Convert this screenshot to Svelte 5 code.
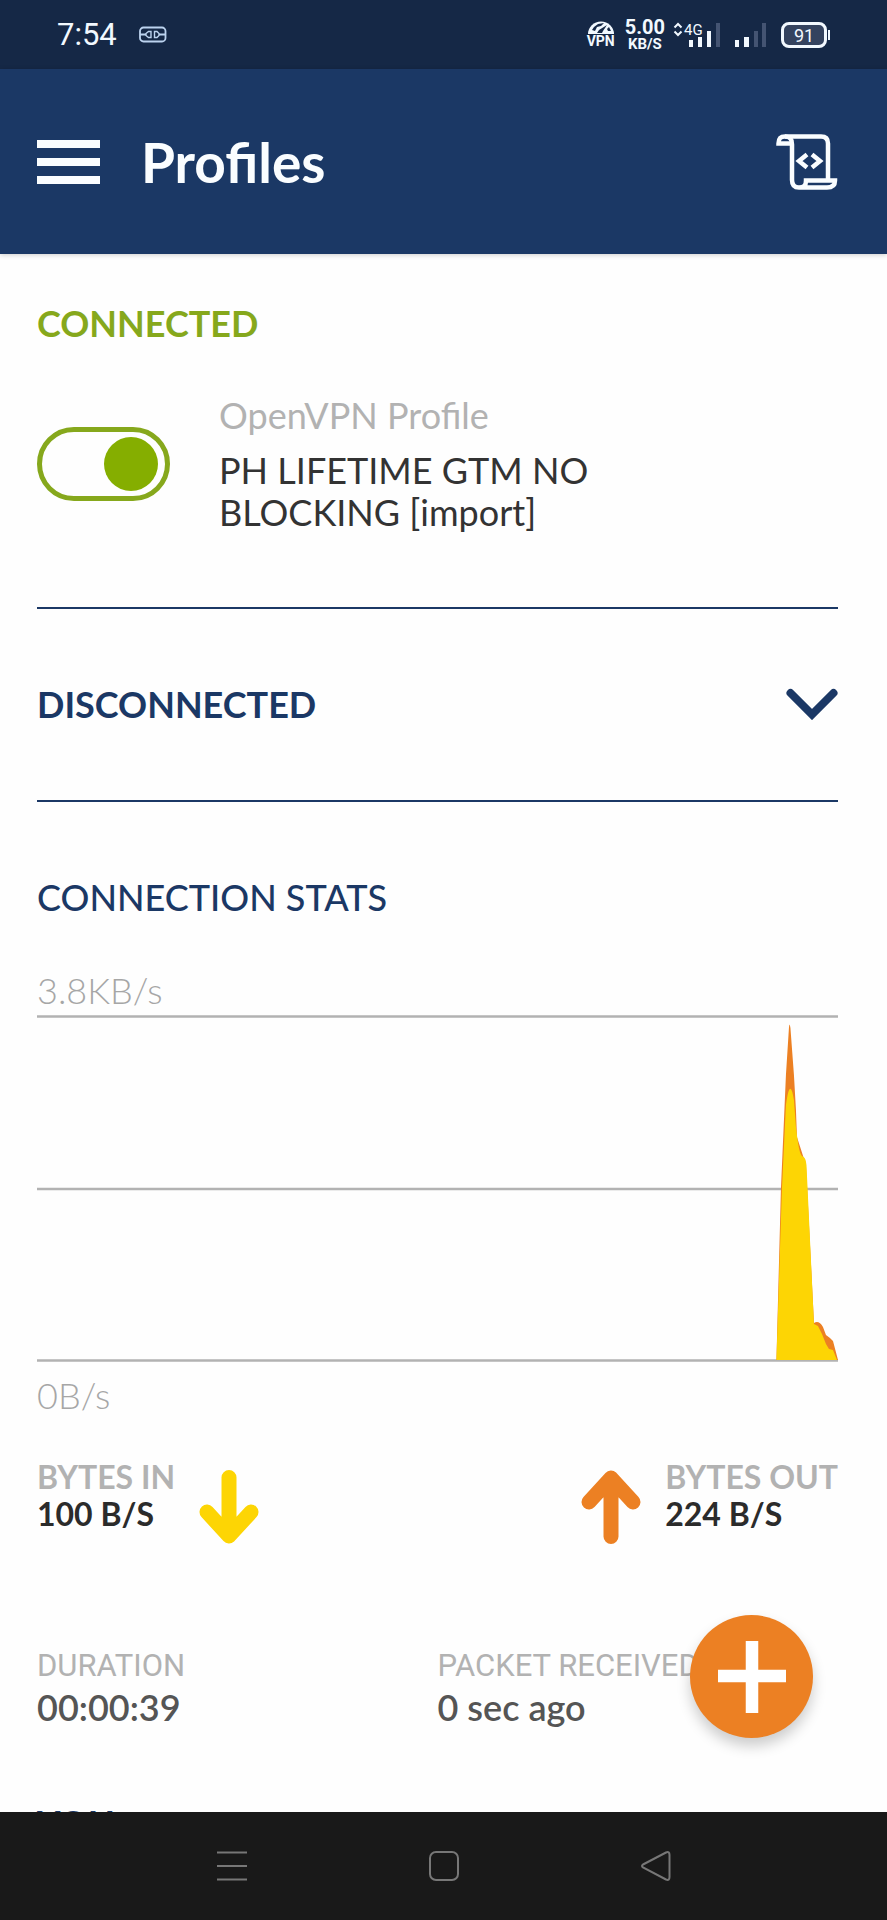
<script lang="ts">
  let connected = true;

  const profile = {
    label: "OpenVPN Profile",
    name: "PH LIFETIME GTM NO BLOCKING [import]",
  };

  const details = [
    { label: "DURATION", value: "00:00:39" },
    { label: "PACKET RECEIVED", value: "0 sec ago" },
  ];
</script>

<div class="screen">
  <div class="status">
    <span class="status__time">7:54</span>
    <svg class="status__plug" width="28" height="18" viewBox="0 0 28 18" aria-hidden="true">
      <g fill="none" stroke="currentColor" stroke-width="1.8">
        <rect x="1" y="1.500" width="25.500" height="14" rx="3.500" />
        <path d="M1 8.500h6M20 8.500h6" />
        <path d="M12 5.500H9.500L7 7.500v2l2.500 2H12zM15.500 5.500H18l2 2v2l-2 2h-2.500z" stroke-width="1.400" />
      </g>
    </svg>

    <div class="status__right">
      <div class="vpn">
        <svg width="26" height="13" viewBox="0 0 26 13" aria-hidden="true">
          <path d="M0 13a13 12.500 0 0 1 26 0z" fill="currentColor" />
          <path d="M4 9l2-3 4-3 6-1-3 3-4 1-2 4zM9 12l2-3 8-5-4 6-1 2zM19 8l2-2 2 4h-3z" fill="#152846" />
        </svg>
        <span>VPN</span>
      </div>
      <div class="speed">
        <span class="speed__value">5.00</span>
        <span class="speed__unit">KB/S</span>
      </div>
      <svg class="signal" width="48" height="26" viewBox="0 0 48 26" aria-hidden="true">
        <path d="M1.500 5.500L5 2l3.500 3.500M1.500 9.500L5 13l3.500-3.500" fill="none" stroke="currentColor" stroke-width="2" />
        <text x="11" y="13">4G</text>
        <path d="M16 18h4v7h-4zM25 15h4v10h-4zM34 9h4v16h-4z" fill="currentColor" />
        <path d="M43 1h4v24h-4z" fill="#445472" />
      </svg>
      <svg width="32" height="26" viewBox="0 0 32 26" aria-hidden="true">
        <path d="M0 18h4v7H0zM9 15h5v10H9z" fill="currentColor" />
        <path d="M19 9h4v16h-4zM27 1h4v24h-4z" fill="#445472" />
      </svg>
      <div class="battery">91</div>
    </div>
  </div>

  <header class="header">
    <button class="menu" aria-label="Menu">
      <span></span>
      <span></span>
      <span></span>
    </button>
    <h1>Profiles</h1>
    <button class="log" aria-label="Log">
      <svg width="62" height="56" viewBox="0 0 62 56" fill="none" stroke="currentColor" stroke-width="4.500">
        <path d="M15 9.500H2.500C2.500 5 4 2.500 9 2.500H45c4.500 0 7 2.500 7 7V46" />
        <path d="M9 2.500c5 0 7 2.500 7 8V46c0 5 2.500 7.500 7 7.500H51c5 0 8-2 8-7H30c0 5-2 7-7 7" />
        <path d="M31 20.500l-8 6.500 8 6.500M36 20.500l8 6.500-8 6.500" />
      </svg>
    </button>
  </header>

  <main class="content">
    <section class="connected">
      <h2 class="is-green">CONNECTED</h2>
      <div class="profile">
        <input id="profile-switch" class="switch" type="checkbox" role="switch" bind:checked={connected} />
        <label for="profile-switch" class="profile__text">
          <span class="profile__label">{profile.label}</span>
          <span class="profile__name">{profile.name}</span>
        </label>
      </div>
    </section>

    <section class="section">
      <h2>
        <button class="expand" aria-expanded="false">
          DISCONNECTED
          <svg width="52" height="32" viewBox="0 0 52 32" aria-hidden="true">
            <path d="M4.500 5L26 26.500 47.500 5" fill="none" stroke="currentColor" stroke-width="8" stroke-linecap="round" />
          </svg>
        </button>
      </h2>
    </section>

    <section class="section">
      <h2 class="is-medium">CONNECTION STATS</h2>
      <div class="scale scale--top">3.8KB/s</div>
      <svg class="chart" viewBox="0 0 800 347" preserveAspectRatio="none" role="img" aria-label="Traffic">
        <path d="M0 1.500H800M0 174H800M0 345.500H800" stroke="#b2b2b2" stroke-width="2.500" />
        <path
          d="M738.500 345L743 174 748 60 751 13Q751.500 6 752.500 13L756 60 758 95 759 122 768 150 776 308Q781 305 785 312L788 320 792 323 795 326 800 345z"
          fill="#ec8023"
        />
        <path
          d="M738.500 345L744 174 748 90Q752 60 756 85L758 112Q761 139 764 141 768 142 768.500 150L776 309 780 311 784 319 788 329 791 334 795 335 799 345z"
          fill="#fdd504"
        />
      </svg>
      <div class="scale scale--bottom">0B/s</div>

      <div class="traffic">
        <div class="traffic__item">
          <div>
            <div class="traffic__label">BYTES IN</div>
            <div class="traffic__value">100 B/S</div>
          </div>
          <svg class="arrow arrow--in" width="60" height="74" viewBox="0 0 60 74" aria-hidden="true">
            <path d="M30 7.500V60M8 42L30 66 52 42M22 54L30 62 38 54" />
          </svg>
        </div>
        <div class="traffic__item">
          <svg class="arrow arrow--out" width="60" height="74" viewBox="0 0 60 74" aria-hidden="true">
            <path d="M30 66.500V14M8 32L30 8 52 32M22 20L30 12 38 20" />
          </svg>
          <div>
            <div class="traffic__label">BYTES OUT</div>
            <div class="traffic__value">224 B/S</div>
          </div>
        </div>
      </div>

      <dl class="details">
        {#each details as item}
          <div>
            <dt>{item.label}</dt>
            <dd>{item.value}</dd>
          </div>
        {/each}
      </dl>

      <h2 class="you">YOU</h2>
    </section>
  </main>

  <button class="add" aria-label="Add profile">
    <svg width="68" height="72" viewBox="0 0 68 72" aria-hidden="true">
      <path d="M34 0V72M0 35H68" stroke="currentColor" stroke-width="12.500" />
    </svg>
  </button>

  <nav class="nav">
    <button aria-label="Recent apps">
      <svg width="30" height="32" viewBox="0 0 30 32">
        <path d="M0 2.500H30M0 16H30M0 29.500H30" />
      </svg>
    </button>
    <button aria-label="Home">
      <svg width="30" height="32" viewBox="0 0 30 32">
        <rect x="1" y="2" width="28" height="28" rx="6" />
      </svg>
    </button>
    <button aria-label="Back">
      <svg width="30" height="32" viewBox="0 0 30 32">
        <path d="M2 14.500L25 2.500Q28.500 1 28.500 5V27Q28.500 31 25 29.500L2 17.500Q0 16 2 14.500z" />
      </svg>
    </button>
  </nav>
</div>

<style>
  :global(body) {
    background: #fefefe;
  }

  .screen {
    position: relative;
    display: flex;
    flex-direction: column;
    height: 100vh;
    overflow: hidden;
    color: #1b3865;
    font-family: Lato, "Open Sans", sans-serif;
    font-size: 36px;
    line-height: 42px;
  }

  button {
    padding: 0;
    border: 0;
    background: none;
    color: inherit;
    font: inherit;
    cursor: pointer;
  }

  svg {
    display: block;
    flex-shrink: 0;
  }

  h1,
  h2,
  dl,
  dd {
    margin: 0;
  }

  .status {
    display: flex;
    flex-shrink: 0;
    align-items: center;
    height: 69px;
    padding: 0 57px;
    background: #152846;
    color: #f2f9ff;
    font-family: Roboto, sans-serif;
  }

  .status__time {
    font-size: 31px;
  }

  .status__plug {
    margin-left: 22px;
    color: #bcd3ef;
  }

  .status__right {
    display: flex;
    align-items: center;
    margin-left: auto;
  }

  .vpn {
    display: flex;
    flex-direction: column;
    align-items: center;
    margin-right: 10px;
    font-size: 14px;
    font-weight: 700;
    line-height: 14px;
  }

  .speed {
    display: flex;
    flex-direction: column;
    align-items: center;
    margin-right: 8px;
    font-weight: 700;
  }

  .speed__value {
    font-size: 20px;
    line-height: 18px;
  }

  .speed__unit {
    font-size: 15px;
    line-height: 16px;
  }

  .signal {
    margin-right: 14px;
    overflow: visible;
  }

  .signal text {
    fill: currentColor;
    font-size: 15px;
  }

  .battery {
    position: relative;
    box-sizing: border-box;
    width: 46px;
    height: 26px;
    margin: 0 3px 0 14px;
    border: 3px solid currentColor;
    border-radius: 8px;
    background: #34435f;
    font-size: 18px;
    line-height: 21px;
    text-align: center;
  }

  .battery::after {
    content: "";
    position: absolute;
    top: 5px;
    right: -6px;
    width: 2px;
    height: 10px;
    background: currentColor;
  }

  .header {
    position: relative;
    z-index: 1;
    display: flex;
    flex-shrink: 0;
    align-items: center;
    height: 185px;
    padding: 0 49px 0 37px;
    background: #1b3865;
    color: #fafdff;
    box-shadow: 0 1px 5px rgba(0, 0, 0, 0.2);
  }

  .header h1 {
    margin-left: 41px;
    font-size: 55px;
    font-weight: 700;
    line-height: 64px;
  }

  .menu {
    display: flex;
    flex-direction: column;
    gap: 10px;
    width: 63px;
  }

  .menu span {
    height: 8px;
    background: currentColor;
  }

  .log {
    margin-left: auto;
  }

  .content {
    flex: 1;
    min-height: 0;
    overflow-y: auto;
    scrollbar-width: none;
    padding: 0 49px 0 37px;
  }

  h2 {
    font-size: 36px;
    font-weight: 700;
  }

  h2.is-green {
    color: #86a81c;
  }

  h2.is-medium {
    font-weight: 500;
  }

  .connected {
    padding: 48px 0 74px;
  }

  .section {
    padding: 74px 0 75px;
    border-top: 2px solid #1b3865;
  }

  .profile {
    display: flex;
    align-items: center;
    gap: 49px;
    margin-top: 50px;
  }

  .switch {
    position: relative;
    appearance: none;
    box-sizing: border-box;
    flex-shrink: 0;
    width: 133px;
    height: 74px;
    margin: 0;
    border: 5px solid #86a81c;
    border-radius: 37px;
    cursor: pointer;
  }

  .switch::before {
    content: "";
    position: absolute;
    top: 5px;
    left: 7px;
    width: 54px;
    height: 54px;
    border-radius: 50%;
    background: #85ae00;
  }

  .switch:checked::before {
    right: 7px;
    left: auto;
  }

  .profile__text {
    display: flex;
    flex-direction: column;
    gap: 13px;
    max-width: 400px;
  }

  .profile__label {
    color: #b2b2b2;
  }

  .profile__name {
    color: #333333;
  }

  .expand {
    display: flex;
    align-items: center;
    justify-content: space-between;
    width: 100%;
  }

  .scale {
    color: #a6a6a6;
    font-weight: 300;
  }

  .scale--top {
    margin-top: 51px;
  }

  .chart {
    width: 100%;
    height: 347px;
    margin: 4px 0 12px;
  }

  .traffic {
    display: flex;
    justify-content: space-between;
    margin-top: 42px;
    font-size: 32px;
    font-weight: 700;
    line-height: 37px;
  }

  .traffic__item {
    display: flex;
    align-items: flex-end;
    gap: 24px;
    height: 86px;
  }

  .traffic__item > div {
    align-self: flex-start;
  }

  .traffic__label {
    color: #b2b2b2;
  }

  .traffic__value {
    color: #2b2b2b;
  }

  .arrow {
    fill: none;
    stroke-width: 15;
    stroke-linecap: round;
    stroke-linejoin: round;
  }

  .arrow--in {
    stroke: #fdd504;
  }

  .arrow--out {
    stroke: #ec8023;
  }

  .details {
    display: grid;
    grid-template-columns: 1fr 1fr;
    margin: 102px 0 74px;
    white-space: nowrap;
  }

  dt {
    color: #b2b2b2;
    font-family: Roboto, sans-serif;
    font-size: 31px;
    line-height: 40px;
  }

  dd {
    color: #555555;
    font-weight: 600;
  }

  .add {
    position: absolute;
    right: 74px;
    bottom: 182px;
    z-index: 1;
    display: flex;
    align-items: center;
    justify-content: center;
    width: 123px;
    height: 123px;
    border-radius: 50%;
    background: #ec8023;
    color: #ffffff;
    box-shadow: 0 8px 14px rgba(0, 0, 0, 0.2);
  }

  .nav {
    display: flex;
    flex-shrink: 0;
    align-items: center;
    justify-content: center;
    gap: 182px;
    height: 108px;
    background: #191919;
    color: #777777;
  }

  .nav svg {
    fill: none;
    stroke: currentColor;
    stroke-width: 2;
  }
</style>
